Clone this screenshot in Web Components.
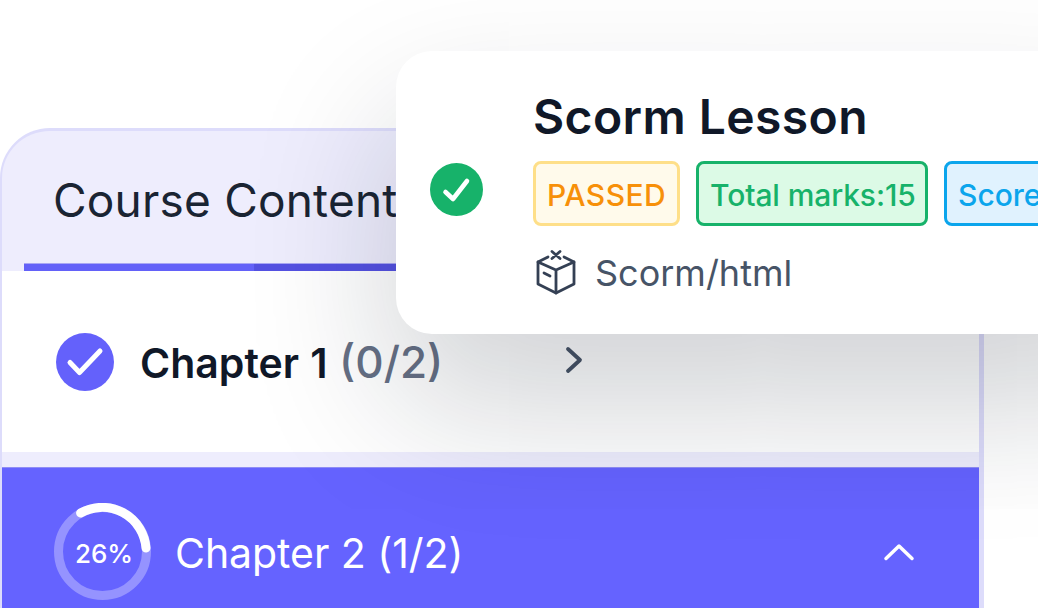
<!DOCTYPE html>
<html lang="en">
<head>
  <meta charset="UTF-8">
  <title>Course Content</title>
  <style>
    html, body { margin: 0; height: 608px; overflow: hidden; background: #fff; }
    body { font-family: Inter, "Noto Sans", sans-serif; position: relative; }
  </style>
</head>
<body>
  <course-panel heading="Course Content">
    <chapter-row state="done" progress="(0/2)" title="Chapter 1"></chapter-row>
    <chapter-row state="active" title="Chapter 2 (1/2)"></chapter-row>
  </course-panel>
  <lesson-card heading="Scorm Lesson" kind="Scorm/html">
    <status-tag tone="amber">PASSED</status-tag>
    <status-tag tone="green">Total marks:15</status-tag>
    <status-tag tone="blue">Score</status-tag>
  </lesson-card>
  <script>
    class CoursePanel extends HTMLElement {
      constructor () {
        super()
        const root = this.attachShadow({mode: 'open'})
        root.innerHTML = `
          <style>
            :host {
              display: block;
              box-sizing: border-box;
              width: 984px;
              height: 480px;
              margin-top: 128px;
              background: #eeedfd;
              border: solid #dddcfb;
              border-width: 3px 5px 0 2px;
              border-top-left-radius: 50px;
              overflow: hidden;
            }
            .tabs { height: 140px; padding-left: 22px; box-sizing: border-box; }
            .tab {
              box-sizing: border-box;
              height: 132px;
              padding: 43px 0 0 29px;
              font-size: 46px;
              letter-spacing: .2px;
              line-height: 52px;
              color: #1a2433;
              white-space: nowrap;
            }
            .bar {
              box-sizing: border-box;
              width: 520px;
              height: 8px;
              border-top: 1px solid #a9a7f4;
              background: linear-gradient(90deg, #6361f8 230px, #5451e2 230px);
            }
            .rows { display: flex; flex-direction: column; gap: 15px; }
          </style>
          <div class="tabs"><div class="tab"></div><div class="bar"></div></div>
          <div class="rows"><slot></slot></div>
        `
      }
      connectedCallback () {
        this.shadowRoot.querySelector('.tab').textContent = this.getAttribute('heading')
      }
    }

    class ChapterRow extends HTMLElement {
      constructor () {
        super()
        this.attachShadow({mode: 'open'})
      }
      connectedCallback () {
        const active = this.getAttribute('state') === 'active'
        const title = this.getAttribute('title')
        const progress = this.getAttribute('progress')
        this.shadowRoot.innerHTML = `
          <style>
            :host {
              display: flex;
              align-items: flex-start;
              box-sizing: border-box;
              height: ${active ? 142 : 181}px;
              background: ${active ? '#6563ff' : '#fff'};
              color: ${active ? '#fff' : '#101828'};
              padding: ${active ? '35px 0 0 52px' : '62px 0 0 54px'};
              ${active ? 'border-top: 1px solid #8f8df5;' : ''}
            }
            .icon { flex: none; display: block; }
            .label {
              font-size: 41px;
              line-height: 48px;
              white-space: nowrap;
              font-weight: ${active ? 400 : 600};
              margin: ${active ? '26px 0 0 21px' : '5px 0 0 26px'};
              ${active ? 'letter-spacing: -.05px;' : 'flex: none; width: 422px; word-spacing: 1px;'}
            }
            .label span { color: #667085; font-size: 44px; font-weight: 500; }
            .ring { position: relative; width: 100px; height: 100px; flex: none; }
            .ring b {
              position: absolute; inset: 0;
              display: flex; align-items: center; justify-content: center;
              font-size: 26px; font-weight: 500;
            }
            .end { flex: none; }
          </style>
          ${active ? `
            <div class="ring">
              <svg class="icon" width="100" height="100" viewBox="0 0 100 100" fill="none">
                <circle cx="48.5" cy="48.5" r="44" stroke="#9593ff" stroke-width="9"/>
                <path d="M26.6 10A44 44 0 0 1 92 45" stroke="#fff" stroke-width="9" stroke-linecap="round"/>
              </svg>
              <b>26%</b>
            </div>` : `
            <svg class="icon" width="58" height="58" viewBox="0 0 58 58" fill="none">
              <circle cx="29" cy="29" r="29" fill="#6461fb"/>
              <path d="M14 29.5 23.5 39.5 44 18" stroke="#fff" stroke-width="5" stroke-linecap="round" stroke-linejoin="round"/>
            </svg>`}
          <div class="label">${title}${progress ? ` <span>${progress}</span>` : ''}</div>
          ${active ? `
            <svg class="end" style="margin:40px 64px 0 auto" width="32" height="18" viewBox="0 0 32 18" fill="none">
              <path d="M3 15.5 16 3l13 12.5" stroke="#fff" stroke-width="3.5" stroke-linecap="round" stroke-linejoin="round"/>
            </svg>` : `
            <svg class="end" style="margin-top:11px" width="24" height="32" viewBox="0 0 24 32" fill="none">
              <path d="M6 5 18 16 6 27" stroke="#475467" stroke-width="3.8" stroke-linecap="round" stroke-linejoin="round"/>
            </svg>`}
        `
      }
    }

    class LessonCard extends HTMLElement {
      constructor () {
        super()
        this.attachShadow({mode: 'open'})
      }
      connectedCallback () {
        this.shadowRoot.innerHTML = `
          <style>
            :host {
              position: absolute;
              left: 396px;
              top: 51px;
              width: 760px;
              height: 283px;
              box-sizing: border-box;
              display: flex;
              align-items: center;
              padding-left: 34px;
              background: #fff;
              border-radius: 36px;
              box-shadow: 0 70px 150px rgba(16, 24, 40, .2);
            }
            .status { flex: none; margin-top: -6px; }
            .main { margin-left: 50px; }
            h2 {
              margin: 0;
              font-size: 48px;
              letter-spacing: .4px;
              line-height: 56px;
              font-weight: 600;
              color: #101828;
              white-space: nowrap;
            }
            .tags { display: flex; gap: 16px; margin-top: 16px; }
            .kind {
              display: flex;
              align-items: center;
              gap: 18px;
              margin-top: 22px;
              margin-left: 2px;
              font-size: 36px;
              line-height: 46px;
              color: #475467;
              white-space: nowrap;
            }
            .kind svg { flex: none; }
            .kind span { margin-top: 2px; }
          </style>
          <svg class="status" width="53" height="53" viewBox="0 0 53 53" fill="none">
            <circle cx="26.5" cy="26.5" r="26.5" fill="#17b26a"/>
            <path d="M15.5 29 23 36 37 18" stroke="#fff" stroke-width="4.6" stroke-linecap="round" stroke-linejoin="round"/>
          </svg>
          <div class="main">
            <h2>${this.getAttribute('heading')}</h2>
            <div class="tags"><slot></slot></div>
            <div class="kind">
              <svg width="42" height="46" viewBox="0 0 42 46" fill="none" stroke="#344054" stroke-width="2.8" stroke-linecap="round" stroke-linejoin="round">
                <path d="M13 8 3 13v22l18 9 18-9V13L29 8"/>
                <path d="M3 13l18 8 18-8M21 21v23M9 24l6 3"/>
                <path d="M17 2.5l8 7M25 2.5l-8 7"/>
              </svg>
              <span>${this.getAttribute('kind')}</span>
            </div>
          </div>
        `
      }
    }

    const tagTones = {
      amber: ['#fffaeb', '#fedf89', '#f79009', '147px', '.4px', 'center'],
      green: ['#dcfae6', '#17b26a', '#17b26a', '232px', '-.1px', 'center'],
      blue: ['#e0f2fe', '#0ba5ec', '#0ba5ec', '160px', '0', 'left']
    }

    class StatusTag extends HTMLElement {
      constructor () {
        super()
        this.attachShadow({mode: 'open'})
      }
      connectedCallback () {
        const [bg, line, ink, width, spacing, align] = tagTones[this.getAttribute('tone')]
        this.shadowRoot.innerHTML = `
          <style>
            :host {
              display: block;
              flex: none;
              box-sizing: border-box;
              width: ${width};
              height: 65px;
              padding: 0 11px;
              text-align: ${align};
              background: ${bg};
              border: 3px solid ${line};
              border-radius: 8px;
              color: ${ink};
              font-size: 30px;
              font-weight: 500;
              letter-spacing: ${spacing};
              line-height: 63px;
              white-space: nowrap;
            }
          </style>
          <slot></slot>
        `
      }
    }

    customElements.define('course-panel', CoursePanel)
    customElements.define('chapter-row', ChapterRow)
    customElements.define('lesson-card', LessonCard)
    customElements.define('status-tag', StatusTag)
  </script>
</body>
</html>
